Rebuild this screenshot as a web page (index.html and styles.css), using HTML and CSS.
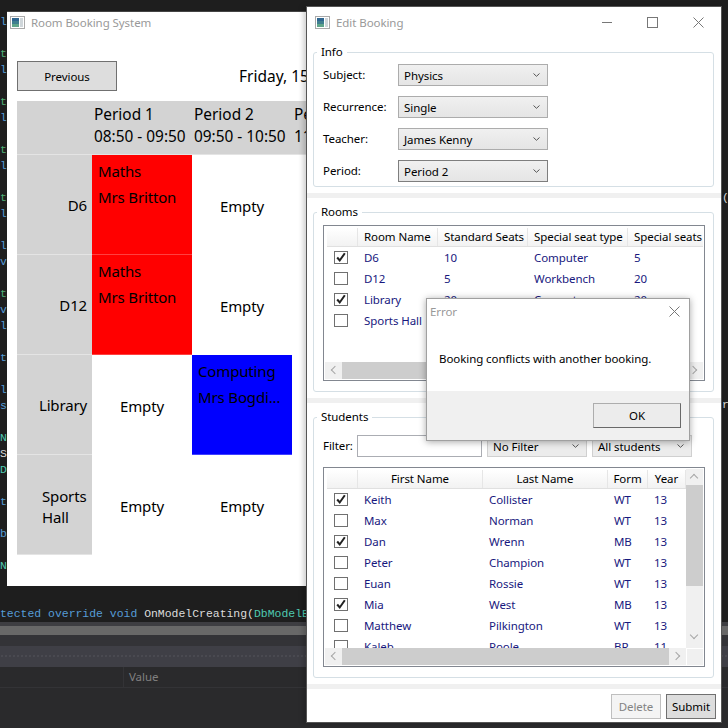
FILE: index.html
```html
<!DOCTYPE html>
<html lang="en">
<head>
    <meta charset="UTF-8">
    <title>Room Booking System</title>
    <link rel="stylesheet" href="styles.css">
</head>
<body>
    <svg class="defs" aria-hidden="true">
        <symbol id="app-icon" viewBox="0 0 15 13">
            <rect x="0.5" y="0.5" width="14" height="12" fill="#fff" stroke="#a9a9a9"/>
            <rect x="2" y="2" width="7" height="9" fill="#3f7f8f"/>
            <rect x="2" y="2" width="7" height="3" fill="#2f6690"/>
            <rect x="2" y="8" width="7" height="3" fill="#5fa58a"/>
            <rect x="10" y="2" width="3" height="9" fill="#cfd6da"/>
        </symbol>
        <symbol id="tick" viewBox="0 0 14 13">
            <path d="M2.5 6.5 L5.5 10 L11.5 1.5" fill="none" stroke="#222" stroke-width="2.4"/>
        </symbol>
        <symbol id="chevron" viewBox="0 0 7 4">
            <path d="M0.5 0.5 L3.5 3.3 L6.5 0.5" fill="none" stroke="#555" stroke-width="1"/>
        </symbol>
        <symbol id="close" viewBox="0 0 11 11">
            <path d="M0.5 0.5 L10.5 10.5 M10.5 0.5 L0.5 10.5" fill="none" stroke="#777" stroke-width="1"/>
        </symbol>
    </svg>

    <!-- IDE behind the windows -->
    <div class="ide">
        <div class="ide-code">
            <div class="stubs">
                <div class="kw">l:</div>
                <div>&nbsp;</div>
                <div class="grn">t&lt;</div>
                <div class="kw">l:</div>
                <div>&nbsp;</div>
                <div class="grn">t&lt;</div>
                <div class="kw">l:</div>
                <div>&nbsp;</div>
                <div class="grn">t&lt;</div>
                <div class="kw">l:</div>
                <div>&nbsp;</div>
                <div class="grn">t&lt;</div>
                <div class="kw">l:</div>
                <div>&nbsp;</div>
                <div class="kw">l:</div>
                <div class="kw">va</div>
                <div>&nbsp;</div>
                <div class="grn">tt</div>
                <div class="kw">va</div>
                <div class="kw">l:</div>
                <div>&nbsp;</div>
                <div class="kw">te</div>
                <div>&nbsp;</div>
                <div class="kw">l:</div>
                <div class="kw">s</div>
                <div>&nbsp;</div>
                <div class="type">N</div>
                <div class="txt">S</div>
                <div class="type">D</div>
                <div>&nbsp;</div>
                <div class="kw">te</div>
                <div>&nbsp;</div>
                <div class="kw">b</div>
                <div>&nbsp;</div>
                <div class="type">N</div>
            </div>
            <span class="right-stub stub-a txt">(o</span>
            <span class="right-stub stub-b txt">ry</span>
            <div class="code-line"><span class="kw">tected override void </span><span class="txt">OnModelCreating(</span><span class="type">DbModelBuilder</span></div>
        </div>
        <div class="ide-scroll"><div class="ide-thumb"></div></div>
        <div class="ide-tab"></div>
        <div class="ide-grip"></div>
        <div class="ide-head"><span class="value-col">Value</span></div>
        <div class="ide-rest"></div>
    </div>

    <!-- Timetable window -->
    <div class="window main-window">
        <div class="titlebar main-title">
            <svg class="app-icon"><use href="#app-icon"/></svg>
            <span>Room Booking System</span>
        </div>
        <div class="main-bar">
            <button class="prev-btn">Previous</button>
            <span class="date">Friday, 15,</span>
        </div>
        <div class="timetable">
            <div class="tt-head"></div>
            <div class="tt-head"><div>Period 1</div><div>08:50 - 09:50</div></div>
            <div class="tt-head"><div>Period 2</div><div>09:50 - 10:50</div></div>
            <div class="tt-head"><div>Period 3</div><div>11:10 - 12:10</div></div>

            <div class="tt-room">D6</div>
            <div class="tt-cell red"><div>Maths</div><div>Mrs Britton</div></div>
            <div class="tt-cell empty">Empty</div>
            <div class="tt-cell empty"></div>

            <div class="tt-room">D12</div>
            <div class="tt-cell red"><div>Maths</div><div>Mrs Britton</div></div>
            <div class="tt-cell empty">Empty</div>
            <div class="tt-cell empty"></div>

            <div class="tt-room">Library</div>
            <div class="tt-cell empty">Empty</div>
            <div class="tt-cell blue"><div>Computing</div><div>Mrs Bogdi...</div></div>
            <div class="tt-cell empty"></div>

            <div class="tt-room"><span class="wrap-room">Sports Hall</span></div>
            <div class="tt-cell empty">Empty</div>
            <div class="tt-cell empty">Empty</div>
            <div class="tt-cell empty"></div>
        </div>
    </div>

    <!-- Edit Booking window -->
    <div class="window edit-window">
        <div class="titlebar edit-title">
            <svg class="app-icon"><use href="#app-icon"/></svg>
            <span class="title-text">Edit Booking</span>
            <div class="win-controls">
                <span class="win-min"></span>
                <span class="win-max"></span>
                <svg class="win-close"><use href="#close"/></svg>
            </div>
        </div>

        <section class="band">
            <fieldset class="group">
                <legend>Info</legend>
                <div class="info-form">
                    <div class="info-row">
                        <label>Subject:</label>
                        <div class="combo"><span>Physics</span><svg class="chev"><use href="#chevron"/></svg></div>
                    </div>
                    <div class="info-row">
                        <label>Recurrence:</label>
                        <div class="combo"><span>Single</span><svg class="chev"><use href="#chevron"/></svg></div>
                    </div>
                    <div class="info-row">
                        <label>Teacher:</label>
                        <div class="combo"><span>James Kenny</span><svg class="chev"><use href="#chevron"/></svg></div>
                    </div>
                    <div class="info-row">
                        <label>Period:</label>
                        <div class="combo active"><span>Period 2</span><svg class="chev"><use href="#chevron"/></svg></div>
                    </div>
                </div>
            </fieldset>
        </section>

        <section class="band">
            <fieldset class="group">
                <legend>Rooms</legend>
                <div class="datagrid rooms-grid">
                    <div class="grid-body">
                        <div class="row head rooms-cols">
                            <div></div>
                            <div>Room Name</div>
                            <div>Standard Seats</div>
                            <div>Special seat type</div>
                            <div>Special seats</div>
                        </div>
                        <div class="row rooms-cols">
                            <div><span class="check"><svg><use href="#tick"/></svg></span></div>
                            <div>D6</div><div>10</div><div>Computer</div><div>5</div>
                        </div>
                        <div class="row rooms-cols">
                            <div><span class="check"></span></div>
                            <div>D12</div><div>5</div><div>Workbench</div><div>20</div>
                        </div>
                        <div class="row rooms-cols">
                            <div><span class="check"><svg><use href="#tick"/></svg></span></div>
                            <div>Library</div><div>20</div><div>Computer</div><div>20</div>
                        </div>
                        <div class="row rooms-cols">
                            <div><span class="check"></span></div>
                            <div>Sports Hall</div><div></div><div></div><div></div>
                        </div>
                    </div>
                    <div class="hscroll">
                        <span class="arrow left"></span>
                        <div class="hthumb rooms-thumb"></div>
                        <span class="arrow right"></span>
                    </div>
                </div>
            </fieldset>
        </section>

        <section class="band grow">
            <fieldset class="group">
                <legend>Students</legend>
                <div class="filter-row">
                    <label>Filter:</label>
                    <div class="filter-input"></div>
                    <div class="combo small"><span>No Filter</span><svg class="chev"><use href="#chevron"/></svg></div>
                    <div class="combo small"><span>All students</span><svg class="chev"><use href="#chevron"/></svg></div>
                </div>
                <div class="datagrid students-grid">
                    <div class="grid-body">
                        <div class="row head center students-cols">
                            <div></div><div>First Name</div><div>Last Name</div><div>Form</div><div>Year</div>
                        </div>
                        <div class="row students-cols">
                            <div><span class="check"><svg><use href="#tick"/></svg></span></div>
                            <div>Keith</div><div>Collister</div><div>WT</div><div>13</div>
                        </div>
                        <div class="row students-cols">
                            <div><span class="check"></span></div>
                            <div>Max</div><div>Norman</div><div>WT</div><div>13</div>
                        </div>
                        <div class="row students-cols">
                            <div><span class="check"><svg><use href="#tick"/></svg></span></div>
                            <div>Dan</div><div>Wrenn</div><div>MB</div><div>13</div>
                        </div>
                        <div class="row students-cols">
                            <div><span class="check"></span></div>
                            <div>Peter</div><div>Champion</div><div>WT</div><div>13</div>
                        </div>
                        <div class="row students-cols">
                            <div><span class="check"></span></div>
                            <div>Euan</div><div>Rossie</div><div>WT</div><div>13</div>
                        </div>
                        <div class="row students-cols">
                            <div><span class="check"><svg><use href="#tick"/></svg></span></div>
                            <div>Mia</div><div>West</div><div>MB</div><div>13</div>
                        </div>
                        <div class="row students-cols">
                            <div><span class="check"></span></div>
                            <div>Matthew</div><div>Pilkington</div><div>WT</div><div>13</div>
                        </div>
                        <div class="row students-cols">
                            <div><span class="check"></span></div>
                            <div>Kaleb</div><div>Poole</div><div>BR</div><div>11</div>
                        </div>
                    </div>
                    <div class="vscroll">
                        <span class="arrow up"></span>
                        <div class="vthumb"></div>
                        <span class="arrow down"></span>
                    </div>
                    <div class="hscroll">
                        <span class="arrow left"></span>
                        <div class="hthumb"></div>
                        <span class="arrow right"></span>
                    </div>
                    <div class="corner"></div>
                </div>
            </fieldset>
        </section>

        <div class="edit-footer">
            <button class="foot-btn disabled">Delete</button>
            <button class="foot-btn">Submit</button>
        </div>
    </div>

    <!-- Error dialog -->
    <div class="window error-dialog">
        <div class="error-title">
            <span>Error</span>
            <svg class="win-close"><use href="#close"/></svg>
        </div>
        <div class="error-msg">Booking conflicts with another booking.</div>
        <div class="error-foot"><button class="ok-btn">OK</button></div>
    </div>
</body>
</html>
```

FILE: styles.css
```css
html, body {
    margin: 0;
    width: 728px;
    height: 728px;
    overflow: hidden;
}
body {
    position: relative;
    font-family: "Noto Sans", sans-serif;
    font-size: 11.5px;
    letter-spacing: -0.07px;
    color: #000;
    background-color: #1e1e1e;
}
.defs {
    position: absolute;
    width: 0;
    height: 0;
}
button {
    font-family: inherit;
    letter-spacing: inherit;
    color: inherit;
}

/* IDE behind */
.ide {
    height: 728px;
    display: flex;
    flex-direction: column;
}
.ide-code {
    flex: 1;
    min-height: 0;
    display: flex;
    flex-direction: column;
    justify-content: flex-end;
    font-family: "Liberation Mono", monospace;
    font-size: 11.45px;
    letter-spacing: 0;
    line-height: 16px;
}
.stubs {
    position: absolute;
    top: 14px;
    left: 0;
    width: 7px;
    overflow: hidden;
    white-space: nowrap;
}
.right-stub {
    position: absolute;
    left: 722px;
}
.stub-a { top: 190px; }
.stub-b { top: 397px; }
.kw { color: #569cd6; }
.grn { color: #4fae74; }
.type { color: #4ec9b0; }
.txt { color: #dcdcdc; }
.code-line {
    height: 16px;
    white-space: pre;
}
.ide-scroll {
    height: 9px;
    padding-top: 4px;
    background-color: #3e3e42;
}
.ide-thumb {
    height: 9px;
    background-color: #686868;
}
.ide-tab {
    height: 11px;
    background-color: #333337;
}
.ide-grip {
    height: 21px;
    background-color: #3f3f46;
    background-image: radial-gradient(#55555c 0.6px, transparent 0.8px);
    background-size: 4px 4px;
    background-position: 0 8px;
    background-repeat: repeat-x;
}
.ide-head {
    height: 20px;
    padding-left: 123px;
    background-color: #2a2a2c;
    border-bottom: 1px solid #333336;
    color: #808080;
}
.value-col {
    display: block;
    height: 20px;
    padding-left: 5px;
    line-height: 20px;
    border-left: 1px solid #333336;
}
.ide-rest {
    height: 40px;
    background-color: #2a2a2c;
}

/* windows */
.window {
    position: absolute;
    background-color: #fff;
    display: flex;
    flex-direction: column;
    overflow: hidden;
}
.main-window {
    left: 7px;
    top: 11px;
    width: 300px;
    height: 575px;
    box-sizing: border-box;
    border-top: 1px solid #444;
}
.edit-window {
    left: 306px;
    top: 6px;
    width: 416px;
    height: 717px;
    box-sizing: border-box;
    border: 1px solid #555;
    box-shadow: -3px 0 5px rgba(0, 0, 0, 0.18);
}
.error-dialog {
    left: 426px;
    top: 298px;
    width: 264px;
    height: 143px;
    box-sizing: border-box;
    border: 1px solid #a0a0a0;
    box-shadow: 0 1px 7px rgba(0, 0, 0, 0.35);
}

.titlebar {
    box-sizing: border-box;
    display: flex;
    align-items: center;
    height: 22px;
    padding: 0 0 1px 8px;
    color: #999;
}
.main-title {
    padding-left: 3px;
}
.app-icon {
    width: 15px;
    height: 13px;
    margin-right: 6px;
}
.edit-title {
    height: 31px;
    flex: none;
}
.title-text {
    flex: 1;
}
.win-controls {
    display: flex;
    align-items: center;
    width: 121px;
}
.win-min {
    width: 10px;
    height: 1px;
    margin-left: 2px;
    background-color: #777;
}
.win-max {
    width: 9px;
    height: 9px;
    margin-left: 35px;
    border: 1px solid #777;
}
.win-close {
    width: 11px;
    height: 11px;
    margin-left: 35px;
}

/* timetable */
.main-bar {
    display: flex;
    align-items: center;
    height: 30px;
    margin: 27px 0 10px 10px;
}
.prev-btn {
    flex: none;
    width: 100px;
    height: 30px;
    font-size: 11.5px;
    background-color: #dddddd;
    border: 1px solid #707070;
}
.date {
    flex: none;
    margin-left: 122px;
    font-size: 15.5px;
    letter-spacing: 0;
    white-space: nowrap;
}
.timetable {
    display: grid;
    grid-template-columns: 75px 100px 100px 100px;
    grid-template-rows: 54px repeat(4, 100px);
    margin-left: 10px;
    font-size: 15px;
    letter-spacing: -0.15px;
}
.tt-head {
    padding: 3px 0 0 2px;
    font-size: 15.4px;
    letter-spacing: 0;
    line-height: 22px;
    white-space: nowrap;
    background-color: #d3d3d3;
    border-bottom: 1px solid #e4e4e4;
}
.tt-room {
    display: flex;
    align-items: center;
    justify-content: flex-end;
    padding: 2px 5px 0 0;
    background-color: #d3d3d3;
    border-bottom: 1px solid #e4e4e4;
    line-height: 21px;
}
.wrap-room {
    width: 45px;
    padding-top: 2px;
}
.tt-cell {
    box-sizing: border-box;
    border-bottom: 1px solid rgba(255, 255, 255, 0.25);
    line-height: 26px;
}
.tt-cell.empty {
    display: flex;
    align-items: center;
    justify-content: center;
    padding-top: 2px;
    background-color: #fff;
    border-bottom: 0;
}
.tt-cell.red,
.tt-cell.blue {
    padding: 3px 0 0 6px;
    white-space: nowrap;
}
.tt-cell.red { background-color: #ff0000; }
.tt-cell.blue { background-color: #0000ff; }

/* edit booking */
.band {
    flex: none;
    box-sizing: border-box;
    padding: 6px 7px 6px 6px;
    border-bottom: 5px solid #f0f0f0;
}
.group {
    margin: 0;
    padding: 0 8px 0 9px;
    border: 1px solid #d5dfe5;
    border-radius: 3px;
}
.group legend {
    margin-left: -6px;
    padding: 0 4px;
    line-height: 16px;
}
.info-form {
    display: flex;
    flex-direction: column;
    gap: 10px;
    padding: 4px 0;
}
.info-row {
    display: flex;
    align-items: center;
    height: 22px;
}
.info-row label {
    width: 75px;
    padding-bottom: 2px;
}
.combo {
    box-sizing: border-box;
    display: flex;
    align-items: center;
    justify-content: space-between;
    width: 150px;
    height: 22px;
    padding: 0 7px 0 5px;
    border: 1px solid #acacac;
    background: linear-gradient(#f0f0f0, #e5e5e5);
}
.combo.active {
    border-color: #7e7e7e;
}
.combo.small {
    width: 100px;
    border-color: #d0d0d0;
    background: #ececec;
}
.chev {
    width: 7px;
    height: 4px;
}

.datagrid {
    box-sizing: border-box;
    display: grid;
    grid-template-columns: 1fr;
    grid-template-rows: 1fr 17px;
    padding: 1px;
    border: 1px solid #828790;
    background-color: #fff;
}
.rooms-grid {
    height: 156px;
    margin: 5px 0 10px;
}
.students-grid {
    height: 200px;
    margin-bottom: 10px;
    grid-template-columns: 1fr 17px;
}
.grid-body {
    overflow: hidden;
    padding: 1px 0 0 2px;
}
.row {
    display: grid;
    height: 21px;
    align-items: center;
    white-space: nowrap;
    color: #18187e;
}
.row > div {
    padding-left: 6px;
}
.row.head {
    height: 18px;
    color: #000;
    background: linear-gradient(#fff, #f2f2f2);
    border-bottom: 1px solid #e0e0e0;
}
.row.head > div {
    box-sizing: border-box;
    height: 100%;
    line-height: 17px;
    border-right: 1px solid #e6e6e6;
}
.row.center > div {
    padding-left: 0;
    text-align: center;
}
.rooms-cols {
    grid-template-columns: 31px 80px 90px 100px 76px;
}
.students-cols {
    grid-template-columns: 31px 125px 125px 40px 38px;
}
.row > div:first-child {
    padding-left: 7px;
    height: 13px;
}
.row.head > div:first-child {
    height: 100%;
}
.check {
    display: block;
    box-sizing: border-box;
    width: 14px;
    height: 13px;
    background-color: #fff;
    border: 1px solid #707070;
}
.check svg {
    display: block;
    width: 12px;
    height: 11px;
}
.hscroll {
    display: flex;
    align-items: center;
    background-color: #f0f0f0;
}
.arrow {
    position: relative;
    flex: none;
}
.hscroll .arrow {
    width: 17px;
    height: 17px;
}
.arrow::before {
    content: "";
    position: absolute;
    width: 5px;
    height: 5px;
    border-left: 1px solid #a6a6a6;
    border-top: 1px solid #a6a6a6;
}
.arrow.left::before {
    left: 7px;
    top: 5px;
    transform: rotate(-45deg);
}
.arrow.right::before {
    left: 4px;
    top: 5px;
    transform: rotate(135deg);
}
.hthumb {
    flex: 1;
    height: 17px;
    background-color: #cdcdcd;
}
.vscroll {
    display: flex;
    flex-direction: column;
    grid-row: 1;
    grid-column: 2;
    background-color: #f0f0f0;
}
.vscroll .arrow {
    height: 16px;
}
.arrow.up::before {
    left: 5px;
    top: 6px;
    transform: rotate(45deg);
}
.vscroll .arrow.down {
    margin-top: auto;
}
.arrow.down::before {
    left: 5px;
    top: 0;
    transform: rotate(225deg);
}
.vthumb {
    height: 101px;
    background-color: #cdcdcd;
}
.corner {
    background-color: #f0f0f0;
    border-top: 1px solid #fff;
    border-left: 1px solid #fff;
}
.filter-row {
    display: flex;
    align-items: center;
    gap: 5px;
    height: 22px;
    margin: 10px 0;
}
.filter-row label {
    width: 29px;
    padding-bottom: 2px;
}
.filter-input {
    box-sizing: border-box;
    width: 125px;
    height: 22px;
    border: 1px solid #abadb3;
}
.edit-footer {
    flex: 1;
    display: flex;
    justify-content: flex-end;
    gap: 5px;
    padding: 5px 5px 0 0;
}
.foot-btn {
    box-sizing: border-box;
    width: 50px;
    height: 25px;
    padding: 0;
    font-size: 11.5px;
    background-color: #dddddd;
    border: 1px solid #707070;
}
.foot-btn.disabled {
    color: #838383;
    background-color: #f4f4f4;
    border-color: #bfbfbf;
}

/* error dialog */
.error-title {
    display: flex;
    align-items: center;
    justify-content: space-between;
    height: 25px;
    padding: 0 9px 0 3px;
    color: #999;
}
.error-msg {
    flex: 1;
    display: flex;
    align-items: center;
    padding: 2px 0 0 12px;
}
.error-foot {
    display: flex;
    justify-content: flex-end;
    align-items: flex-start;
    box-sizing: border-box;
    height: 49px;
    padding: 12px 8px 0 0;
    background-color: #f0f0f0;
}
.ok-btn {
    box-sizing: border-box;
    width: 88px;
    height: 25px;
    padding: 0;
    font-size: 11.5px;
    background-color: #ececec;
    border: 1px solid #adadad;
    border-right-color: #696969;
    border-bottom-color: #696969;
}
```
